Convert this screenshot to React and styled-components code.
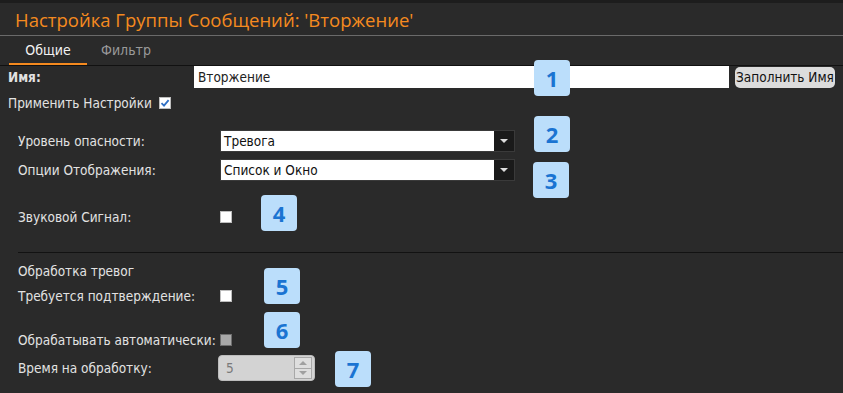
import React from "react";
import styled, { createGlobalStyle } from "styled-components";

const Global = createGlobalStyle`
  html, body { margin: 0; padding: 0; background: #2a2a2a; }
  * { box-sizing: border-box; }
`;

const Page = styled.div`
  position: relative;
  width: 843px;
  height: 393px;
  overflow: hidden;
  background: #2a2a2a;
  border-top: 3px solid #1d1d1d;
  font-family: "DejaVu Sans Condensed", "Liberation Sans", sans-serif;
  font-size: 13.5px;
  color: #e2e2e2;
`;

const Title = styled.div`
  height: 33px;
  padding-left: 15px;
  display: flex;
  align-items: center;
  font-family: "Open Sans", sans-serif;
  font-size: 18.5px;
  color: #f58a1f;
  border-bottom: 1px solid #6a6a6a;
`;

const Tabs = styled.div`
  height: 30px;
  display: flex;
  align-items: stretch;
  padding-left: 9px;
  border-bottom: 1px solid #111;
`;

const Tab = styled.div`
  display: flex;
  align-items: center;
  justify-content: center;
  width: 78px;
  font-size: 14px;
  color: ${(p) => (p.$active ? "#f2f2f2" : "#9a9a9a")};
  border-bottom: 2px solid ${(p) => (p.$active ? "#f58a1f" : "transparent")};
`;

const Row = styled.div`
  display: flex;
  align-items: center;
  height: ${(p) => p.$h}px;
  margin-top: ${(p) => p.$top || 0}px;
  padding-left: ${(p) => p.$pad || 0}px;
  & > * { flex-shrink: 0; }
`;

const Label = styled.div`
  width: ${(p) => p.$w}px;
  font-weight: ${(p) => (p.$bold ? 700 : 400)};
  white-space: nowrap;
`;

const TextInput = styled.div`
  width: 535px;
  height: 22px;
  background: #fff;
  color: #222;
  padding-left: 4px;
  display: flex;
  align-items: center;
`;

const FillButton = styled.div`
  margin-left: 6px;
  width: 100px;
  height: 21px;
  border-radius: 5px;
  background: #dcdcdc;
  color: #111;
  white-space: nowrap;
  display: flex;
  align-items: center;
  justify-content: center;
`;

const Select = styled.div`
  width: 295px;
  height: 22px;
  border: 1px solid #3a3a3a;
  display: flex;
  background: #1a1a1a;
`;

const SelectValue = styled.div`
  flex: 1;
  background: #fff;
  color: #111;
  padding-left: 3px;
  display: flex;
  align-items: center;
`;

const SelectArrow = styled.div`
  width: 20px;
  display: flex;
  align-items: center;
  justify-content: center;
  &::after {
    content: "";
    border-left: 4px solid transparent;
    border-right: 4px solid transparent;
    border-top: 4px solid #ddd;
  }
`;

const Check = styled.div`
  width: 12px;
  height: 12px;
  border: 1px solid ${(p) => (p.$disabled ? "#6e6e6e" : "#bdbdbd")};
  background: ${(p) => (p.$disabled ? "#a9a9a9" : "#fff")};
  display: flex;
  align-items: center;
  justify-content: center;
  margin-left: ${(p) => p.$left || 0}px;
`;

const Divider = styled.div`
  margin: 25px 0 0 18px;
  height: 1px;
  background: #121212;
`;

const Spinner = styled.div`
  margin-left: -2px;
  width: 97px;
  height: 26px;
  border-radius: 4px;
  background: #d3d3d3;
  border: 1px solid #bdbdbd;
  display: flex;
  align-items: center;
  justify-content: space-between;
  padding: 0 2px 0 7px;
  color: #7a7a7a;
`;

const SpinButtons = styled.div`
  width: 18px;
  height: 22px;
  display: flex;
  flex-direction: column;
  border: 1px solid #a8a8a8;
  background: #dedede;
`;

const SpinHalf = styled.div`
  flex: 1;
  display: flex;
  align-items: center;
  justify-content: center;
  border-top: ${(p) => (p.$down ? "1px solid #a8a8a8" : "none")};
  &::after {
    content: "";
    border-left: 4px solid transparent;
    border-right: 4px solid transparent;
    ${(p) =>
      p.$down ? "border-top: 4px solid #a0a0a0;" : "border-bottom: 4px solid #a0a0a0;"}
  }
`;

const Badge = styled.div`
  position: absolute;
  width: 36px;
  height: 36px;
  border-radius: 4px;
  background: #bbdefb;
  color: #1a74d2;
  font-family: "Open Sans", sans-serif;
  font-weight: 700;
  font-size: 22px;
  display: flex;
  align-items: center;
  justify-content: center;
`;

const badges = [
  { n: 1, x: 534, y: 57 },
  { n: 2, x: 534, y: 113 },
  { n: 3, x: 533, y: 159 },
  { n: 4, x: 261, y: 192 },
  { n: 5, x: 264, y: 265 },
  { n: 6, x: 264, y: 309 },
  { n: 7, x: 335, y: 348 },
];

const Tick = () => (
  <svg width="10" height="10" viewBox="0 0 10 10">
    <path d="M1.5 5.2 L4 7.6 L8.6 2.2" fill="none" stroke="#2f6fc4" strokeWidth="1.8" />
  </svg>
);

export default function App() {
  return (
    <Page>
      <Global />
      <Title>Настройка Группы Сообщений: 'Вторжение'</Title>
      <Tabs>
        <Tab $active>Общие</Tab>
        <Tab>Фильтр</Tab>
      </Tabs>

      <Row $h={22} $pad={8}>
        <Label $w={186} $bold>Имя:</Label>
        <TextInput>Вторжение</TextInput>
        <FillButton>Заполнить Имя</FillButton>
      </Row>

      <Row $h={18} $top={6} $pad={8}>
        <Label>Применить Настройки</Label>
        <Check $left={7}>
          <Tick />
        </Check>
      </Row>

      <Row $h={22} $top={18} $pad={18}>
        <Label $w={202}>Уровень опасности:</Label>
        <Select>
          <SelectValue>Тревога</SelectValue>
          <SelectArrow />
        </Select>
      </Row>

      <Row $h={22} $top={7} $pad={18}>
        <Label $w={202}>Опции Отображения:</Label>
        <Select>
          <SelectValue>Список и Окно</SelectValue>
          <SelectArrow />
        </Select>
      </Row>

      <Row $h={20} $top={26} $pad={18}>
        <Label $w={202}>Звуковой Сигнал:</Label>
        <Check />
      </Row>

      <Divider />

      <Row $h={18} $top={9} $pad={18}>
        <Label>Обработка тревог</Label>
      </Row>

      <Row $h={18} $top={7} $pad={18}>
        <Label $w={202}>Требуется подтверждение:</Label>
        <Check />
      </Row>

      <Row $h={18} $top={26} $pad={18}>
        <Label $w={202}>Обрабатывать автоматически:</Label>
        <Check $disabled />
      </Row>

      <Row $h={26} $top={6} $pad={18}>
        <Label $w={202}>Время на обработку:</Label>
        <Spinner>
          5
          <SpinButtons>
            <SpinHalf />
            <SpinHalf $down />
          </SpinButtons>
        </Spinner>
      </Row>

      {badges.map((b) => (
        <Badge key={b.n} style={{ left: b.x, top: b.y }}>
          {b.n}
        </Badge>
      ))}
    </Page>
  );
}
